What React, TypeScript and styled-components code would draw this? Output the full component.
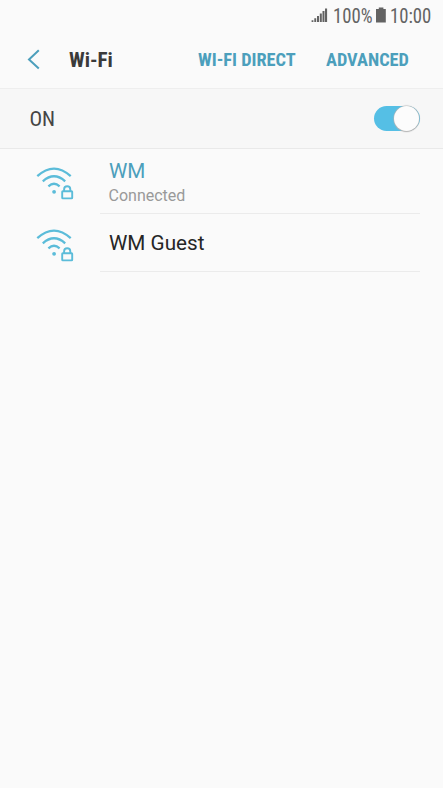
import React from "react";
import styled, { createGlobalStyle } from "styled-components";

const GlobalStyle = createGlobalStyle`
  * { box-sizing: border-box; }
  body { margin: 0; background: #fafafa; font-family: Roboto, sans-serif; }
`;

const Screen = styled.main`
  height: 788px;
  width: 443px;
  overflow: hidden;
  background: #fafafa;
`;

const StatusBar = styled.div`
  display: flex;
  align-items: center;
  height: 32px;
  padding-left: 311px;
  color: #636363;
  svg { flex: none; }
`;

const Label = styled.span<{ $width: number; $size: number; $weight?: number; $squeeze?: number }>`
  display: block;
  flex: none;
  width: ${(p) => p.$width}px;
  margin: 0;
  font-size: ${(p) => p.$size}px;
  font-weight: ${(p) => p.$weight ?? 400};
  font-stretch: 75%;
  line-height: 24px;
  white-space: nowrap;
  transform: scaleX(${(p) => p.$squeeze ?? 1});
  transform-origin: left;
`;

const StatusText = styled(Label)`
  padding-top: 1px;
`;

const Header = styled.header`
  display: flex;
  align-items: center;
  height: 57px;
  padding-left: 27px;
  border-bottom: 1px solid #eeeeee;
  color: #3a3a3a;
`;

const BackButton = styled.button`
  display: flex;
  width: 42px;
  padding: 0;
  border: 0;
  background: none;
`;

const Actions = styled.nav`
  display: flex;
  gap: 30.5px;
  margin-left: 85px;
  color: #4c9fbc;
`;

const PowerRow = styled.section`
  display: flex;
  align-items: center;
  justify-content: space-between;
  height: 60px;
  padding: 0 23px 0 29.5px;
  background: #f7f7f7;
  border-bottom: 1px solid #e9e9e9;
  color: #454545;
`;

const Switch = styled.div`
  display: flex;
  align-items: center;
  justify-content: flex-end;
  width: 46px;
  height: 25px;
  border-radius: 13px;
  background: #55bfe5;
`;

const Knob = styled.div`
  flex: none;
  width: 25px;
  height: 25px;
  margin-right: 1px;
  border-radius: 50%;
  background: #fcfcfc;
  box-shadow: 0 0 1px 0.5px #b4b4b4, 0 1px 1px #bbb;
`;

const Network = styled.article<{ $height: number }>`
  display: flex;
  height: ${(p) => p.$height}px;
  padding-right: 23px;
`;

const IconCell = styled.div<{ $top: number }>`
  width: 100px;
  padding: ${(p) => p.$top}px 0 0 34px;
`;

const Details = styled.div<{ $top?: number }>`
  flex: 1;
  display: flex;
  flex-direction: column;
  justify-content: center;
  padding: ${(p) => p.$top ?? 0}px 0 0 8.5px;
  border-bottom: 1px solid #ebebeb;
`;

const Name = styled.div<{ $connected?: boolean }>`
  font-size: 21px;
  line-height: 26px;
  color: ${(p) => (p.$connected ? "#4c9fbc" : "#262626")};
  transform: scaleX(0.985);
  transform-origin: left;
`;

const State = styled.div`
  font-size: 16px;
  line-height: 23px;
  color: #999;
`;

const WifiIcon = () => (
  <svg width="42" height="42" viewBox="0 0 42 42" fill="none" stroke="#5bbcd9" strokeWidth="2.3">
    <path d="M3.3 16.2Q20 1 36.7 16.2M8.8 21.3Q20 11.3 31.2 21.3M14.4 26.3Q20 21.3 25.6 26.3" />
    <circle cx="20.1" cy="31.8" r="1.9" fill="#5bbcd9" stroke="none" />
    <rect x="28.2" y="31.2" width="10" height="7.2" rx="0.6" strokeWidth="1.9" />
    <path d="M30.1 31v-1.6a3.1 3.1 0 0 1 6.2 0V31" strokeWidth="1.9" />
  </svg>
);

export default function App() {
  return (
    <Screen>
      <GlobalStyle />
      <StatusBar>
        <svg width="22" height="18" viewBox="0 1.3 22 18" fill="currentColor">
          <path d="M.6 14.5h1.8v1.8H.6zM3.3 12.6h1.9v3.7H3.3zM6 10.2h2v6.1H6zM8.8 7.7h2v8.6h-2zM11.5 5.2h2v11.1h-2zM14 2.8h2.1v13.5H14z" />
        </svg>
        <StatusText $width={42} $size={19.5} $squeeze={0.96}>100%</StatusText>
        <svg width="15" height="18" viewBox="0 0.8 15 18" fill="currentColor">
          <path d="M3.8 1.2h4.6v1.6h2.4v13.4H1V2.8h2.8z" />
        </svg>
        <StatusText $width={42} $size={19.5} $squeeze={0.96}>10:00</StatusText>
      </StatusBar>
      <Header>
        <BackButton aria-label="Back">
          <svg width="14" height="22" viewBox="0 0.6 14 22" fill="none" stroke="#4c9fbc" strokeWidth="2">
            <path d="M11.8 1.8 2 11l9.8 9.2" />
          </svg>
        </BackButton>
        <Label as="h1" $width={44} $size={21} $weight={700}>Wi-Fi</Label>
        <Actions>
          <Label $width={97} $size={18.7} $weight={700} $squeeze={0.98}>WI-FI DIRECT</Label>
          <Label $width={83} $size={18.7} $weight={700} $squeeze={0.98}>ADVANCED</Label>
        </Actions>
      </Header>
      <PowerRow>
        <Label $width={26} $size={21}>ON</Label>
        <Switch role="switch" aria-checked="true"><Knob /></Switch>
      </PowerRow>
      <Network $height={65}>
        <IconCell $top={11}><WifiIcon /></IconCell>
        <Details $top={2}>
          <Name $connected>WM</Name>
          <State>Connected</State>
        </Details>
      </Network>
      <Network $height={58}>
        <IconCell $top={8}><WifiIcon /></IconCell>
        <Details><Name>WM Guest</Name></Details>
      </Network>
    </Screen>
  );
}
